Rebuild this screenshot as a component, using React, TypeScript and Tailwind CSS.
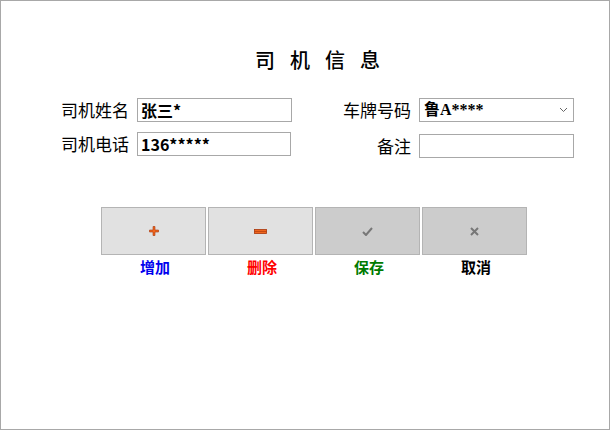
import React from "react";

const cjk = { fontFamily: '"Noto Sans CJK SC", "Liberation Sans", sans-serif' };

function PlusIcon() {
  return (
    <svg width="10" height="10" viewBox="0 0 10 10">
      <path d="M4 0.5h2v3.5h3.5v2H6v3.5H4V6H0.5V4H4z" fill="#f0661e" stroke="#a8360a" strokeWidth="0.6" />
    </svg>
  );
}

function MinusIcon() {
  return (
    <svg width="13" height="5" viewBox="0 0 13 5">
      <rect x="0.5" y="0.5" width="12" height="4" fill="#f0661e" stroke="#a8360a" strokeWidth="0.8" />
      <rect x="0.5" y="2.2" width="12" height="0.6" fill="#a8360a" />
    </svg>
  );
}

function CheckIcon() {
  return (
    <svg width="11" height="9" viewBox="0 0 11 9">
      <path d="M1 5l3 3 6-7" fill="none" stroke="#777" strokeWidth="2" />
    </svg>
  );
}

function CrossIcon() {
  return (
    <svg width="9" height="9" viewBox="0 0 9 9">
      <path d="M1 1l7 7M8 1l-7 7" fill="none" stroke="#777" strokeWidth="2" />
    </svg>
  );
}

export default function App() {
  const buttons = [
    { icon: <PlusIcon />, label: "增加", color: "text-[#0000ee]", bg: "bg-[#e1e1e1]" },
    { icon: <MinusIcon />, label: "删除", color: "text-[#ff0000]", bg: "bg-[#e1e1e1]" },
    { icon: <CheckIcon />, label: "保存", color: "text-[#007a00]", bg: "bg-[#cccccc]" },
    { icon: <CrossIcon />, label: "取消", color: "text-black", bg: "bg-[#cccccc]" },
  ];

  return (
    <div className="w-[610px] h-[430px] bg-white border border-[#a8a8a8] text-black" style={cjk}>
      {/* Title */}
      <div className="pt-[44px] pl-[254px] text-[20px] leading-[30px] tracking-[15px] font-medium">
        司机信息
      </div>

      {/* Form */}
      <div className="mt-[23px] flex flex-col gap-[10px]">
        <div className="flex items-center pl-[53px]">
          <span className="w-[75px] text-right text-[17px] leading-[24px]">司机姓名</span>
          <input
            readOnly
            value="张三*"
            className="ml-[8px] w-[155px] h-[24px] border border-[#a8a8a8] px-[3px] text-[16px] font-semibold outline-none"
            style={cjk}
          />
          <span className="ml-[44px] w-[75px] text-right text-[17px] leading-[24px]">车牌号码</span>
          <div className="ml-[8px] w-[155px] h-[24px] border border-[#a8a8a8] flex items-center justify-between px-[4px]">
            <span
              className="text-[16px] font-bold leading-[22px]"
              style={{ fontFamily: '"Liberation Serif", "Noto Sans CJK SC", serif' }}
            >
              鲁A****
            </span>
            <svg width="9" height="6" viewBox="0 0 9 6" className="mr-[1px]">
              <path d="M1 1l3.5 3.5L8 1" fill="none" stroke="#666" strokeWidth="1" />
            </svg>
          </div>
        </div>
        <div className="flex items-start pl-[53px]">
          <span className="w-[75px] text-right text-[17px] leading-[24px]">司机电话</span>
          <input
            readOnly
            value="136*****"
            className="ml-[8px] w-[154px] h-[24px] border border-[#a8a8a8] px-[3px] text-[16px] font-semibold outline-none"
            style={cjk}
          />
          <span className="ml-[45px] mt-[2px] w-[75px] text-right text-[17px] leading-[24px]">备注</span>
          <input
            readOnly
            value=""
            className="ml-[8px] mt-[2px] w-[155px] h-[24px] border border-[#a8a8a8] px-[3px] text-[16px] outline-none"
          />
        </div>
      </div>

      {/* Buttons */}
      <div className="mt-[49px] pl-[100px] flex gap-[2px]">
        {buttons.map((b) => (
          <div key={b.label} className="flex flex-col items-center w-[105px]">
            <div
              className={`w-[105px] h-[48px] ${b.bg} border border-[#b4b4b4] flex items-center justify-center`}
            >
              {b.icon}
            </div>
            <span className={`mt-[2px] pl-[3px] text-[15px] leading-[20px] font-bold ${b.color}`}>{b.label}</span>
          </div>
        ))}
      </div>
    </div>
  );
}
